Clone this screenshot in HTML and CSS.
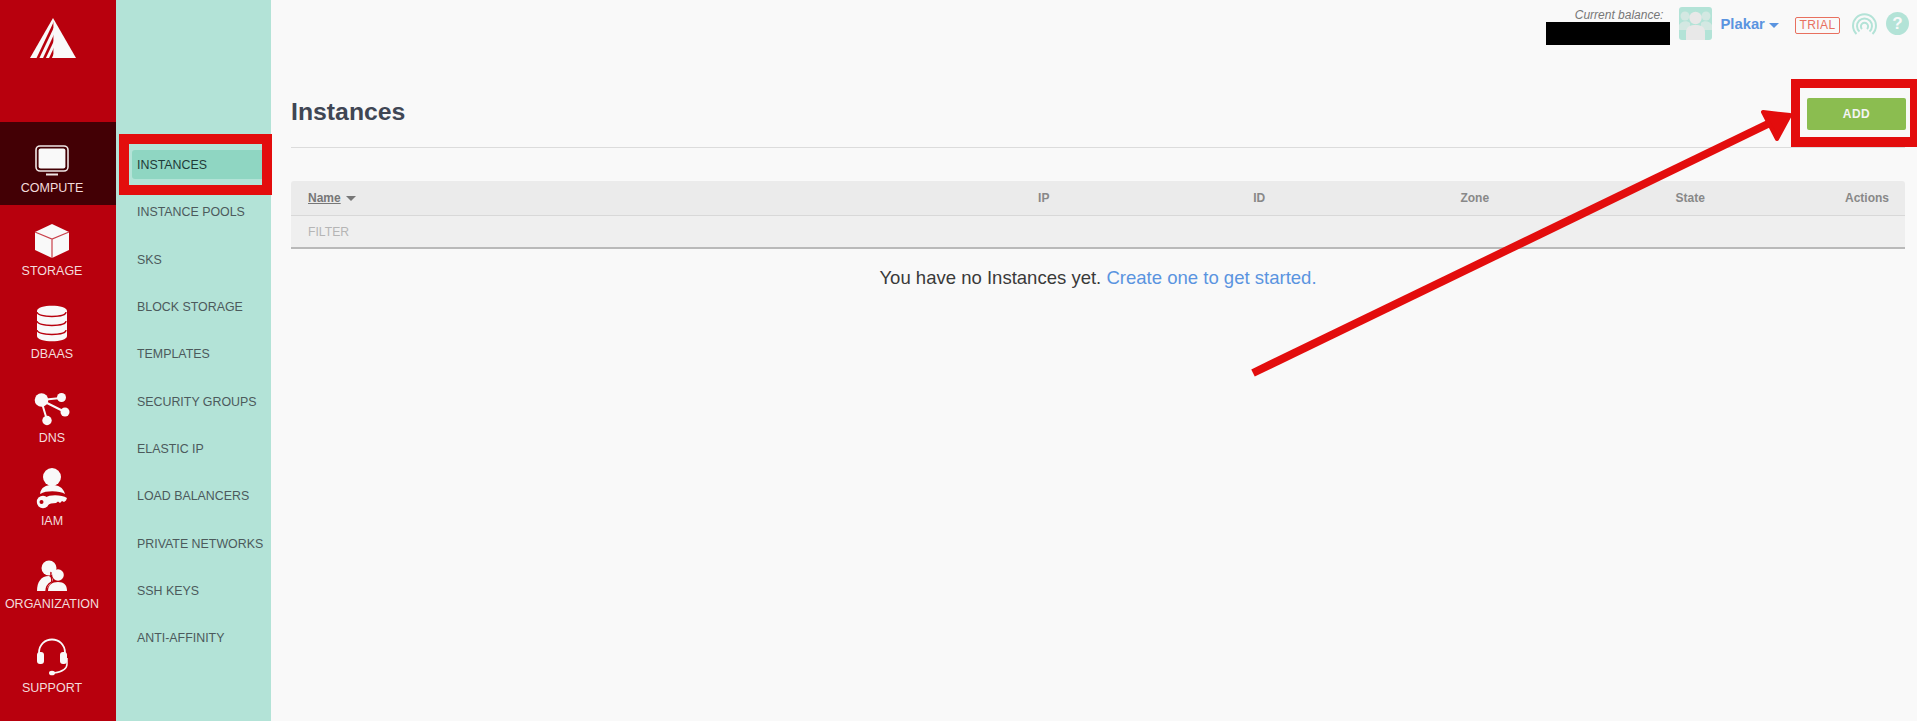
FILE: index.html
```html
<!DOCTYPE html>
<html lang="en">
<head>
    <meta charset="UTF-8">
    <title>Instances</title>
    <link rel="stylesheet" href="styles.css">
</head>
<body>

    <div class="app">
        <nav class="rail">
            <div class="logo">
                <svg width="46" height="40" viewBox="0 0 46 40">
                    <defs><clipPath id="logo-left"><rect width="23.4" height="40"/></clipPath></defs>
                    <path d="M23 0 L46 40 H0 Z" fill="#f9f9f9"/>
                    <g clip-path="url(#logo-left)" stroke="#b8000d" stroke-width="2.6" fill="none">
                        <path d="M7.5 41 L26 2"/>
                        <path d="M14 41 L28 11"/>
                        <path d="M20 41 L29 22"/>
                    </g>
                </svg>
            </div>
            <a class="rail-item active">
                <svg width="35" height="31" viewBox="0 0 35 31">
                    <rect x="1" y="1" width="32" height="25" rx="4" fill="none" stroke="#f0e6e6" stroke-width="1.6"/>
                    <rect x="3.6" y="3.6" width="26.8" height="19.8" rx="2" fill="#f9f9f9"/>
                    <rect x="11" y="28.5" width="12" height="2" fill="#f0e6e6"/>
                </svg>
                <span>COMPUTE</span>
            </a>
            <a class="rail-item">
                <svg width="36" height="36" viewBox="0 0 36 36">
                    <path d="M18 1 L35 9 V27 L18 35 L1 27 V9 Z" fill="#f9f9f9"/>
                    <path d="M1 9 L18 16 L35 9 M18 16 V35" stroke="#c9404a" stroke-width="1.2" fill="none"/>
                </svg>
                <span>STORAGE</span>
            </a>
            <a class="rail-item">
                <svg width="32" height="37" viewBox="0 0 32 37">
                    <path d="M1 6 C1 -1 31 -1 31 6 V31 C31 38 1 38 1 31 Z" fill="#f9f9f9"/>
                    <path d="M1 7 C2 13 30 13 30 7 M1 16 C2 22 30 22 30 16 M1 25 C2 31 30 31 30 25" stroke="#b8000d" stroke-width="1.3" fill="none"/>
                </svg>
                <span>DBAAS</span>
            </a>
            <a class="rail-item">
                <svg width="36" height="34" viewBox="0 0 36 34">
                    <path d="M7 8 L27 6 M7 8 L31 20 M7 8 L13 28" stroke="#f9f9f9" stroke-width="2" fill="none"/>
                    <circle cx="7.5" cy="8" r="6.8" fill="#f9f9f9"/>
                    <circle cx="27.5" cy="5.5" r="4.5" fill="#f9f9f9"/>
                    <circle cx="31" cy="20" r="4.5" fill="#f9f9f9"/>
                    <circle cx="13" cy="28.5" r="4.7" fill="#f9f9f9"/>
                </svg>
                <span>DNS</span>
            </a>
            <a class="rail-item">
                <svg width="32" height="42" viewBox="0 0 32 42">
                    <circle cx="16" cy="10" r="9" fill="#f9f9f9"/>
                    <path d="M4 27 C5 20 10 18 16 18 C22 18 27 20 29 27 C24 24 11 23 4 27 Z" fill="#f9f9f9"/>
                    <circle cx="7" cy="35" r="6.2" fill="#f9f9f9"/>
                    <path d="M9 31 C14 27 26 28 31 31 L30 33.5 L28 35 L26 34 L24 36 L22 34.5 L20 36 L15 36.5 L9 39 Z" fill="#f9f9f9"/>
                    <circle cx="5.5" cy="35" r="2" fill="#b8000d"/>
                </svg>
                <span>IAM</span>
            </a>
            <a class="rail-item">
                <svg width="32" height="32" viewBox="0 0 32 32">
                    <circle cx="13" cy="8" r="7.5" fill="#f9f9f9"/>
                    <path d="M1 31 C1 22 5 16 13 16 L17 19 C17 23 12 24 10 31 Z" fill="#f9f9f9"/>
                    <circle cx="22" cy="15" r="5.8" fill="#f9f9f9"/>
                    <path d="M12 31 C12 25 16 22 22 22 C28 22 31 25 31 31 Z" fill="#f9f9f9"/>
                    <path d="M15 12 C14 16 17 20 15.5 22 C12 24 10 27 10 31" stroke="#b8000d" stroke-width="1.4" fill="none"/>
                </svg>
                <span>ORGANIZATION</span>
            </a>
            <a class="rail-item">
                <svg width="32" height="38" viewBox="0 0 32 38">
                    <path d="M3 18 V15 C3 -3 29 -3 29 15 V18" stroke="#f9f9f9" stroke-width="1.8" fill="none"/>
                    <rect x="1" y="14" width="7" height="12" rx="3" fill="#f9f9f9"/>
                    <rect x="24" y="14" width="7" height="12" rx="3" fill="#f9f9f9"/>
                    <path d="M31 20 V26 C31 31 25 34 18 35" stroke="#f9f9f9" stroke-width="1.5" fill="none"/>
                    <ellipse cx="16" cy="35" rx="3" ry="2.3" fill="#f9f9f9"/>
                </svg>
                <span>SUPPORT</span>
            </a>
        </nav>

        <ul class="subnav">
            <li class="current">INSTANCES</li>
            <li>INSTANCE POOLS</li>
            <li>SKS</li>
            <li>BLOCK STORAGE</li>
            <li>TEMPLATES</li>
            <li>SECURITY GROUPS</li>
            <li>ELASTIC IP</li>
            <li>LOAD BALANCERS</li>
            <li>PRIVATE NETWORKS</li>
            <li>SSH KEYS</li>
            <li>ANTI-AFFINITY</li>
        </ul>

        <main class="main">
            <header class="topbar">
                <div class="balance">
                    <em>Current balance:</em>
                    <div class="redacted"></div>
                </div>
                <div class="avatar">
                    <svg width="33" height="33" viewBox="0 0 33 33">
                        <rect width="33" height="33" rx="3" fill="#b3e3d7"/>
                        <circle cx="6" cy="9" r="4.5" fill="#d3e8e2"/>
                        <circle cx="27" cy="9" r="4.5" fill="#d3e8e2"/>
                        <path d="M0 23 V18 C2 14 8 13 11 16 V23 Z M33 23 V18 C31 14 25 13 22 16 V23 Z" fill="#d3e8e2"/>
                        <circle cx="16.5" cy="11" r="6.2" fill="#e8e8e8"/>
                        <path d="M7 33 V25 C7 19 12 18 16.5 18 C21 18 26 19 26 25 V33 Z" fill="#e8e8e8"/>
                    </svg>
                </div>
                <a class="user">Plakar <i class="caret"></i></a>
                <span class="trial">TRIAL</span>
                <svg class="signal" width="25" height="25" viewBox="0 0 25 25" fill="none" stroke="#b3e3d7" stroke-width="2">
                    <path d="M4.5 22 A11.5 11.5 0 1 1 20.5 22"/>
                    <path d="M7.5 19.5 A7.5 7.5 0 1 1 17.5 19.5"/>
                    <path d="M10 17 A3.6 3.6 0 1 1 15 17"/>
                </svg>
                <span class="help">?</span>
            </header>

            <div class="page-head">
                <h1>Instances</h1>
                <button class="add-btn">ADD</button>
            </div>

            <div class="table-head">
                <div class="col-name"><u>Name</u> <i class="caret gray"></i></div>
                <div class="col-mid">IP</div>
                <div class="col-mid">ID</div>
                <div class="col-mid">Zone</div>
                <div class="col-mid">State</div>
                <div class="col-end">Actions</div>
            </div>
            <div class="table-filter">FILTER</div>

            <p class="empty">You have no Instances yet. <a>Create one to get started.</a></p>
        </main>
    </div>

    <!-- red annotations drawn on top of the screenshot -->
    <div class="mark mark-instances"></div>
    <div class="mark mark-add"></div>
    <svg class="mark-arrow" width="1917" height="721" viewBox="0 0 1917 721">
        <path d="M1253 373 L1772 122" stroke="#e30d0d" stroke-width="8" fill="none"/>
        <path d="M1763 112 L1790 115 L1777 139 Z" fill="#e30d0d" stroke="#e30d0d" stroke-width="4" stroke-linejoin="round"/>
    </svg>

</body>
</html>
```

FILE: styles.css
```css
* { box-sizing: border-box; }
html, body { height: 100%; }
body { margin: 0; background: #f9f9f9; font-family: "Liberation Sans", Arial, sans-serif; overflow: hidden; }
.app { display: flex; height: 721px; }

.rail { width: 116px; flex: none; background: #b8000d; }
.logo { height: 122px; padding: 18px 11px 0 0; display: flex; justify-content: center; align-items: flex-start; }
.rail-item { height: 83.3px; display: flex; flex-direction: column; align-items: center; justify-content: flex-end; padding: 0 12px 9.5px 0; color: #f3dcdc; font-size: 12.5px; line-height: 15px; }
.rail-item svg { margin-bottom: 5px; }
.rail-item.active { background: #430005; }

.subnav { width: 155px; flex: none; margin: 0; padding: 150px 0 0 16px; list-style: none; background: #b3e3d7; color: #4c5a5c; font-size: 12.4px; }
.subnav li { height: 29px; line-height: 31px; margin-bottom: 18.35px; padding-left: 5px; white-space: nowrap; }
.subnav .current { background: #8fd6c2; color: #1f3b38; border-radius: 3px 0 0 3px; }

.main { flex: 1; padding: 0 12px 0 20px; }
.topbar { height: 54px; display: flex; justify-content: flex-end; align-items: flex-start; }
.balance { width: 124px; margin-right: 9px; padding-top: 8px; text-align: right; font-size: 12px; line-height: 14px; color: #777; }
.balance em { display: block; padding-right: 7px; }
.redacted { height: 23px; background: #000; }
.avatar { margin: 7px 8px 0 0; height: 33px; }
.user { margin: 14px 16px 0 0; color: #5a94e0; font-size: 14.8px; font-weight: bold; line-height: 20px; }
.caret { display: inline-block; border: 5px solid transparent; border-top-color: #5a94e0; border-bottom: 0; vertical-align: middle; }
.caret.gray { border-top-color: #777; margin-left: 2px; }
.trial { margin: 17px 12px 0 0; width: 45px; height: 17px; border: 1px solid #e8705f; border-radius: 2px; color: #e8705f; font-size: 12px; line-height: 15px; text-align: center; letter-spacing: .4px; }
.signal { margin: 12px 9px 0 0; }
.help { margin: 12px -4px 0 0; width: 23px; height: 23px; border-radius: 50%; background: #b3e3d7; color: #f9f9f9; font-size: 17px; font-weight: bold; line-height: 23px; text-align: center; }

.page-head { height: 94px; display: flex; justify-content: space-between; align-items: flex-start; border-bottom: 1px solid #dcdcdc; margin-bottom: 33px; }
.page-head h1 { margin: 44px 0 0; font-size: 24.8px; line-height: 28px; color: #3f4654; }
.add-btn { margin: 44px -1px 0 0; width: 99px; height: 32px; background: #8bbd50; color: #f4f4f4; border: none; border-radius: 2px; font: bold 12px "Liberation Sans", Arial, sans-serif; letter-spacing: .5px; }

.table-head { display: grid; grid-template-columns: 628px repeat(4, 215.5px) 1fr; height: 35px; line-height: 34px; padding: 0 16px 0 17px; background: #ebebeb; border-bottom: 1px solid #d8d8d8; border-radius: 3px 3px 0 0; color: #888; font-size: 12px; font-weight: bold; }
.col-name { color: #777; }
.col-mid { text-align: center; }
.col-end { text-align: right; }
.table-filter { height: 33px; padding-left: 17px; line-height: 33px; background: #efefef; border-bottom: 2px solid #b9b9b9; color: #b5b5b5; font-size: 12.2px; }
.empty { margin: 18px 0 0; text-align: center; font-size: 18.55px; line-height: 22px; color: #3a3a3a; }
.empty a { color: #5a94e0; }

.mark { position: absolute; border: 10px solid #e30d0d; }
.mark-instances { left: 119px; top: 134px; width: 153px; height: 61px; }
.mark-add { left: 1791px; top: 79px; width: 126px; height: 68px; border-width: 9px 7px 10px 9px; }
.mark-arrow { position: absolute; left: 0; top: 0; pointer-events: none; }
```
